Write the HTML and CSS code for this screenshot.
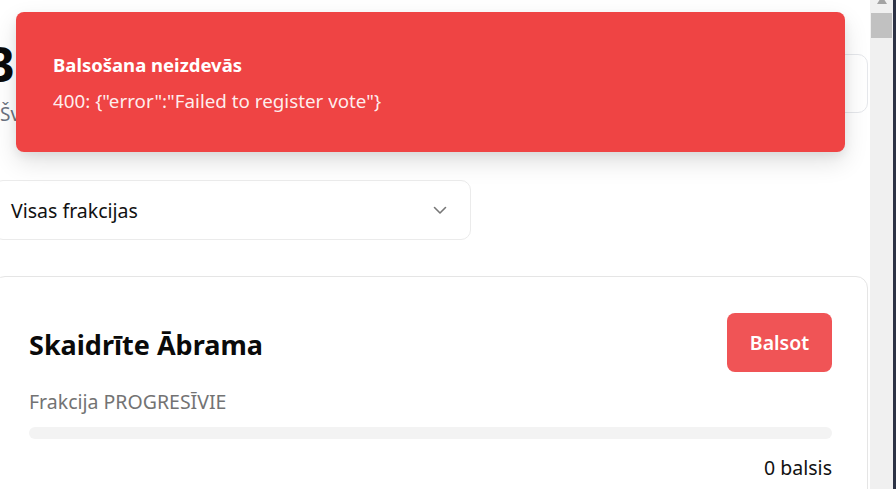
FILE: index.html
```html
<!DOCTYPE html>
<html lang="lv">
<head>
<meta charset="utf-8">
<title>Balsošana</title>
<link rel="stylesheet" href="styles.css">
</head>
<body>
<div class="viewport">
  <div class="page">
    <header class="header">
      <div class="title-block">
        <h1 class="title">Balsošana</h1>
        <p class="subtitle">Švīkājiet</p>
      </div>
      <div class="search" aria-label="Meklēt"></div>
    </header>
    <div class="select">
      <span>Visas frakcijas</span>
      <svg class="chevron" width="16" height="16" viewBox="0 0 16 16"><path d="M2.5 5.5 L8 11 L13.5 5.5" fill="none" stroke="#777" stroke-width="1.6" stroke-linecap="round" stroke-linejoin="round"/></svg>
    </div>
    <section class="card">
      <div class="card-top">
        <h2 class="name">Skaidrīte Ābrama</h2>
        <button class="vote-btn">Balsot</button>
      </div>
      <p class="faction">Frakcija PROGRESĪVIE</p>
      <div class="bar"><div class="bar-fill" style="width:0%"></div></div>
      <p class="votes">0 balsis</p>
    </section>
  </div>
  <div class="toast">
    <div class="toast-title">Balsošana neizdevās</div>
    <div class="toast-msg">400: {"error":"Failed to register vote"}</div>
  </div>
</div>
<div class="scrollbar">
  <div class="arrow"></div>
  <div class="thumb"></div>
</div>
<div class="edge"></div>
</body>
</html>
```
FILE: styles.css
```css
html, body {
  margin: 0;
  padding: 0;
  height: 100%;
}
body {
  display: flex;
  height: 489px;
  overflow: hidden;
  background: #ffffff;
  font-family: "Noto Sans", "Open Sans", sans-serif;
  color: #111;
}
.viewport {
  position: relative;
  width: 870px;
  flex: none;
  overflow: hidden;
}
.page {
  margin-left: -7px;
  width: 875px;
  padding-top: 28px;
}
.header {
  display: flex;
  justify-content: space-between;
  align-items: flex-start;
}
.title-block {
  margin-left: 7px;
}
.title {
  margin: 0 0 0 -17px;
  font-size: 48px;
  font-weight: 700;
  line-height: 72px;
  color: #0a0a0a;
}
.subtitle {
  margin: 2px 0 0 0;
  font-size: 19px;
  color: #6b7280;
  line-height: 24px;
}
.search {
  margin-top: 26px;
  width: 330px;
  height: 59px;
  box-sizing: border-box;
  border: 1px solid #e5e7eb;
  border-radius: 10px;
}
.select {
  margin-top: 54px;
  width: 478px;
  height: 60px;
  box-sizing: border-box;
  border: 1px solid #ebebeb;
  border-radius: 10px;
  display: flex;
  align-items: center;
  justify-content: space-between;
  padding: 0 22px 0 17px;
  font-size: 19.5px;
  color: #111;
}
.card {
  margin-top: 36px;
  border: 1px solid #e5e5e5;
  border-radius: 12px;
  padding: 36px 35px 20px 35px;
  background: #fff;
}
.card-top {
  display: flex;
  justify-content: space-between;
  align-items: center;
}
.name {
  margin: 0;
  padding-top: 3px;
  font-size: 27px;
  font-weight: 700;
  color: #0a0a0a;
}
.vote-btn {
  width: 105px;
  height: 59px;
  border: none;
  border-radius: 8px;
  background: #f05456;
  color: #fff;
  font-family: inherit;
  font-size: 19.5px;
  font-weight: 600;
}
.faction {
  margin: 18px 0 0 0;
  font-size: 19.5px;
  line-height: 24px;
  color: #737373;
}
.bar {
  margin-top: 13px;
  height: 12px;
  border-radius: 6px;
  background: #f3f3f3;
}
.bar-fill {
  height: 100%;
  border-radius: 6px;
  background: #f05456;
}
.votes {
  margin: 17px 0 0 0;
  text-align: right;
  font-size: 19.5px;
  line-height: 24px;
  color: #111;
}
.toast {
  position: absolute;
  left: 16px;
  top: 12px;
  width: 829px;
  height: 140px;
  box-sizing: border-box;
  background: #ef4444;
  border-radius: 8px;
  box-shadow: 0 10px 25px rgba(0, 0, 0, 0.12), 0 4px 10px rgba(0, 0, 0, 0.06);
  padding: 2px 37px 0 37px;
  display: flex;
  flex-direction: column;
  justify-content: center;
  gap: 12px;
  color: #fff;
}
.toast-title {
  font-size: 18.5px;
  font-weight: 700;
  line-height: 24px;
}
.toast-msg {
  font-size: 18.8px;
  line-height: 24px;
  color: rgba(255, 255, 255, 0.92);
}
.scrollbar {
  width: 23px;
  flex: none;
  background: #f0f0f0;
  position: relative;
}
.arrow {
  width: 0;
  height: 0;
  margin: -4px auto 0 auto;
  border-left: 5px solid transparent;
  border-right: 5px solid transparent;
  border-bottom: 8px solid #a3a3a3;
}
.thumb {
  margin: 9px 1px 0 1px;
  height: 25px;
  background: #c1c1c1;
}
.edge {
  width: 3px;
  flex: none;
  background: #2c3245;
}
```
